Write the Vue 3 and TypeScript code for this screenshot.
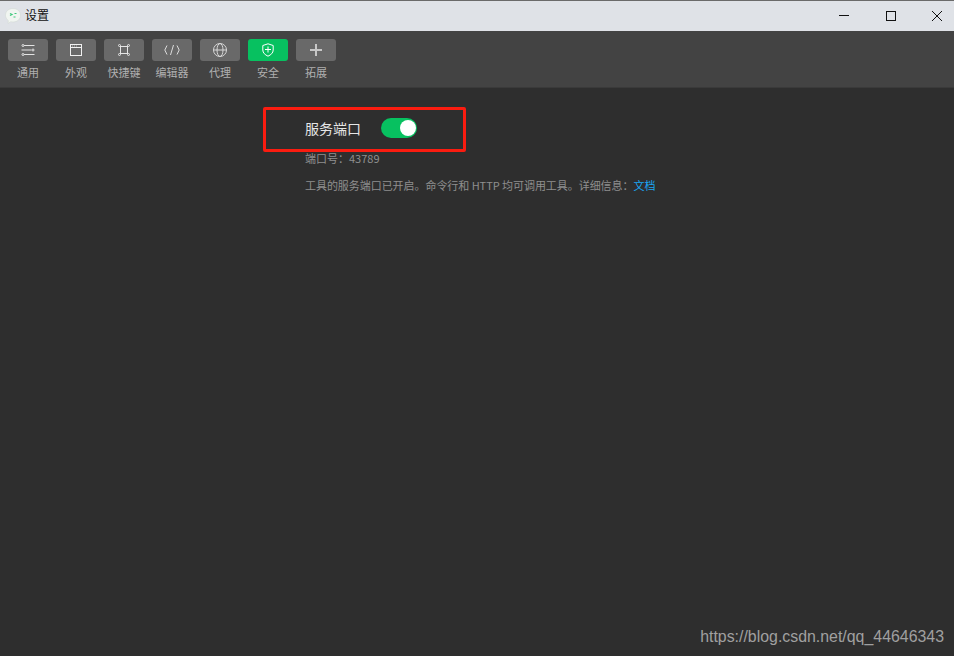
<script setup lang="ts">
interface Tab { label: string; key: string; active?: boolean }
const tabs: Tab[] = [
  { label: '通用', key: 'general' },
  { label: '外观', key: 'look' },
  { label: '快捷键', key: 'keys' },
  { label: '编辑器', key: 'editor' },
  { label: '代理', key: 'proxy' },
  { label: '安全', key: 'security', active: true },
  { label: '拓展', key: 'ext' },
]
</script>

<template>
  <div class="window">
    <div class="edge"></div>
    <header class="titlebar">
      <svg class="logo" width="18" height="18" viewBox="0 0 18 18">
        <path d="M9 1.500c4.300 0 7.500 2.900 7.500 6.800S13.300 15 9 15c-.8 0-1.500-.1-2.200-.3L4 16.500l.3-3C2.600 12.200 1.500 10.400 1.500 8.300 1.500 4.400 4.700 1.500 9 1.500z" fill="#f1f5f1" stroke="#cfd6d0" stroke-width=".5"/>
        <path d="M6 6.500l2 1-2 1" fill="none" stroke="#3ec97c" stroke-width="1.200"/>
        <path d="M10.500 6.500h2M9.500 10h2" fill="none" stroke="#3ec97c" stroke-width="1.200"/>
      </svg>
      <span class="title">设置</span>
      <div class="controls">
        <svg width="46" height="30" viewBox="0 0 46 30"><path d="M17 14.500h10" stroke="#111" fill="none"/></svg>
        <svg width="46" height="30" viewBox="0 0 46 30"><rect x="18.500" y="10.500" width="9" height="9" stroke="#111" fill="none"/></svg>
        <svg width="46" height="30" viewBox="0 0 46 30"><path d="M18 10l10 10M28 10L18 20" stroke="#111" fill="none"/></svg>
      </div>
    </header>
    <nav class="toolbar">
      <div v-for="t in tabs" :key="t.key" class="tab">
        <div class="btn" :class="{ active: t.active }">
          <svg v-if="t.key === 'general'" width="14" height="12" viewBox="0 0 14 12" fill="none" stroke="#e4e4e4">
            <path d="M3 1.500h10.500M.5 6h10M3 10.500h10.500"/>
            <circle cx="2" cy="1.500" r="1"/><circle cx="12" cy="6" r="1"/><circle cx="2" cy="10.500" r="1"/>
          </svg>
          <svg v-else-if="t.key === 'look'" width="12" height="12" viewBox="0 0 12 12" fill="none" stroke="#f0f0f0">
            <rect x=".5" y=".5" width="11" height="11"/><path d="M.5 3.500h11"/>
            <path d="M2 2h1M4 2h1M6 2h1" stroke="#bbb"/>
          </svg>
          <svg v-else-if="t.key === 'keys'" width="12" height="12" viewBox="0 0 12 12" fill="none" stroke="#e4e4e4">
            <rect x="2.500" y="2.500" width="7" height="7"/>
            <circle cx="1.500" cy="1.500" r="1"/><circle cx="10.500" cy="1.500" r="1"/><circle cx="1.500" cy="10.500" r="1"/><circle cx="10.500" cy="10.500" r="1"/>
          </svg>
          <svg v-else-if="t.key === 'editor'" width="16" height="12" viewBox="0 0 16 12" fill="none" stroke="#dcdcdc">
            <path d="M3 1.500L.8 6 3 10.500M13 1.500L15.200 6 13 10.500M9.500 1L6.500 11"/>
          </svg>
          <svg v-else-if="t.key === 'proxy'" width="16" height="16" viewBox="0 0 16 16" fill="none" stroke="#d8d8d8">
            <circle cx="8" cy="8" r="6.500"/><ellipse cx="8" cy="8" rx="3" ry="6.500"/><path d="M1.500 8h13"/>
          </svg>
          <svg v-else-if="t.key === 'security'" width="12" height="14" viewBox="0 0 12 14" fill="none" stroke="#fff">
            <path d="M6 .8l5.200 1.700v4.500c0 2.900-2.200 4.800-5.200 6.200C3 11.800.8 9.900.8 7V2.500z"/><path d="M6 3.500v6M3 6.500h6"/>
          </svg>
          <svg v-else width="12" height="12" viewBox="0 0 12 12" fill="none" stroke="#c8c8c8" stroke-width="2">
            <path d="M6 0v12M0 6h12"/>
          </svg>
        </div>
        <span class="label">{{ t.label }}</span>
      </div>
    </nav>
    <main class="content">
      <div class="row">
        <span class="name">服务端口</span>
        <span class="switch"><span class="knob"></span></span>
      </div>
      <p class="port">端口号：43789</p>
      <p class="desc">工具的服务端口已开启。命令行和 HTTP 均可调用工具。详细信息：<a class="link">文档</a></p>
      <div class="mark"></div>
      <div class="watermark">https://blog.csdn.net/qq_44646343</div>
    </main>
  </div>
</template>

<style>
html, body { margin: 0; background: #2e2e2e; }
</style>

<style scoped>
.window {
  width: 954px;
  height: 656px;
  display: flex;
  flex-direction: column;
  overflow: hidden;
  font-family: "Noto Sans CJK SC", "Liberation Sans", sans-serif;
}
.edge { height: 1px; background: #6a6a6a; }
.titlebar {
  height: 30px;
  background: #dfe2e7;
  display: flex;
  align-items: center;
  padding-left: 4px;
  gap: 3px;
}
.logo { margin-bottom: 0; }
.title { font-size: 12px; line-height: 16px; color: #111; margin-bottom: 3px; }
.controls { margin-left: auto; margin-right: -6px; display: flex; flex-shrink: 0; }
.controls svg { display: block; margin-top: -1px; }
.toolbar {
  height: 57px;
  background: #434343;
  display: flex;
  gap: 8px;
  padding: 8px 0 0 8px;
  box-sizing: border-box;
  border-bottom: 1px solid #3a3a3a;
}
.tab { width: 40px; display: flex; flex-direction: column; align-items: center; }
.btn {
  width: 40px;
  height: 22px;
  border-radius: 3px;
  background: #696969;
  display: flex;
  align-items: center;
  justify-content: center;
}
.btn.active { background: #07c160; }
.label {
  margin-top: 3px;
  font-size: 11px;
  line-height: 16px;
  color: #b0b0b0;
  white-space: nowrap;
}
.content { flex: 1; background: #2e2e2e; position: relative; padding: 30px 0 0 305px; }
.row { display: flex; align-items: center; gap: 20px; height: 20px; }
.name { font-size: 14px; line-height: 18px; color: #e6e6e6; margin-top: -1px; }
.switch {
  width: 36px;
  height: 20px;
  border-radius: 10px;
  background: #07c160;
  position: relative;
  flex-shrink: 0;
}
.knob {
  position: absolute;
  right: 1px;
  top: 2px;
  width: 16px;
  height: 16px;
  border-radius: 50%;
  background: #fff;
}
.port, .desc { margin: 0; font-size: 11px; line-height: 16px; color: #8f8f8f; white-space: nowrap; }
.port { margin-top: 12px; }
.desc { margin-top: 11px; letter-spacing: -0.05px; }
.link { color: #1aa7f5; }
.mark {
  position: absolute;
  left: 263px;
  top: 19px;
  width: 197px;
  height: 39px;
  border: 3px solid #fa1c10;
  border-radius: 2px;
}
.watermark {
  position: absolute;
  right: 10px;
  bottom: 10px;
  font-family: "Liberation Sans", sans-serif;
  font-size: 15.9px;
  line-height: 19px;
  color: #a0a0a0;
}
</style>
